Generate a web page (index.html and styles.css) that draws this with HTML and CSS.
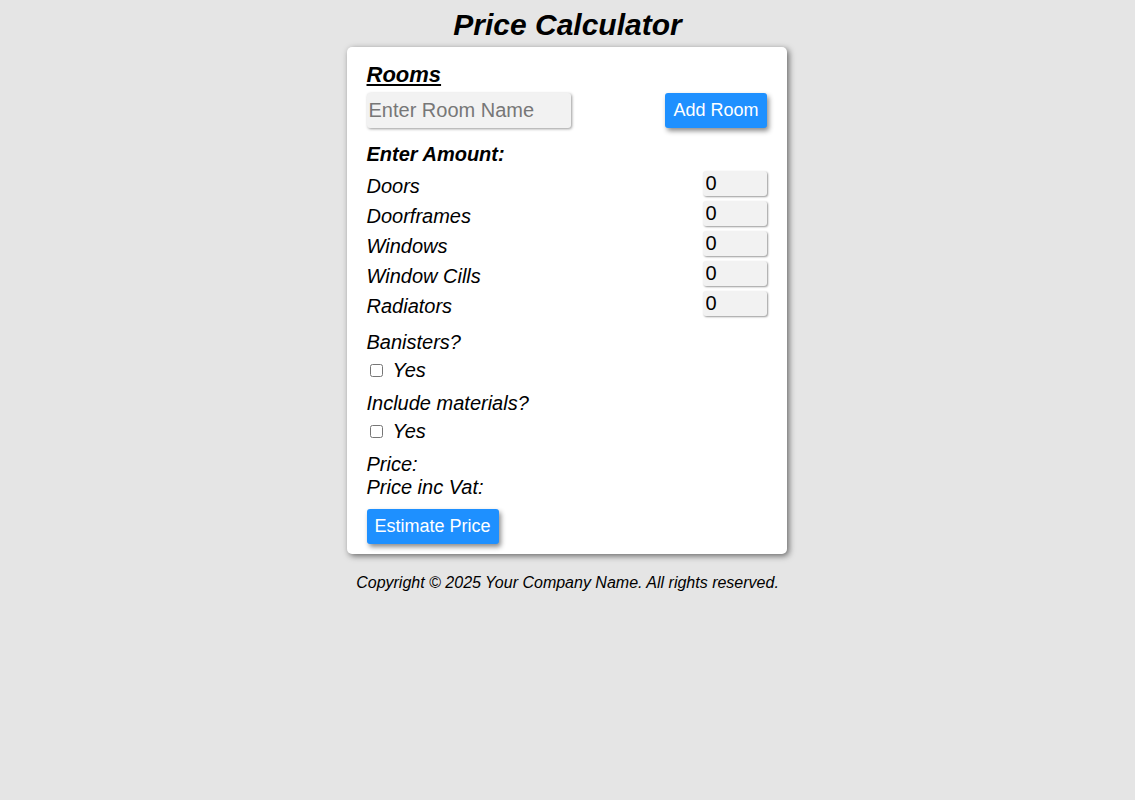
FILE: index.html
```html
<!DOCTYPE html>
<html>
<head>
<meta charset="utf-8">
<link rel="stylesheet" href="styles.css">
</head>
<body>
<h1 class="title">Price Calculator</h1>
<div class="card">
  <div class="rooms-label">Rooms</div>
  <div class="room-row">
    <input class="room-input" type="text" placeholder="Enter Room Name">
    <button class="btn">Add Room</button>
  </div>
  <div class="amount-label">Enter Amount:</div>
  <div class="items">
    <div class="item"><span>Doors</span><input class="num" type="text" value="0"></div>
    <div class="item"><span>Doorframes</span><input class="num" type="text" value="0"></div>
    <div class="item"><span>Windows</span><input class="num" type="text" value="0"></div>
    <div class="item"><span>Window Cills</span><input class="num" type="text" value="0"></div>
    <div class="item"><span>Radiators</span><input class="num" type="text" value="0"></div>
  </div>
  <div class="question first">Banisters?</div>
  <label class="check"><input type="checkbox"><span>Yes</span></label>
  <div class="question">Include materials?</div>
  <label class="check"><input type="checkbox"><span>Yes</span></label>
  <div class="prices">
    <div>Price:</div>
    <div>Price inc Vat:</div>
  </div>
  <button class="btn estimate">Estimate Price</button>
</div>
<p class="footer">Copyright © 2025 Your Company Name. All rights reserved.</p>
</body>
</html>
```
FILE: styles.css
```css
html, body {
  margin: 0;
  padding: 0;
  background: #e5e5e5;
  font-family: "Liberation Sans", Arial, sans-serif;
  color: #000;
}
body {
  padding-top: 6px;
}
.title {
  margin: 0 0 4px;
  text-align: center;
  font-size: 30px;
  font-style: italic;
  font-weight: bold;
  line-height: 37px;
}
.card {
  width: 400px;
  margin: 0 0 0 calc(50% - 221px);
  background: #fff;
  border-radius: 5px;
  padding: 15px 20px 10px;
  box-shadow: 2px 2px 6px rgba(0, 0, 0, 0.55);
}
.rooms-label {
  font-size: 22px;
  font-weight: bold;
  font-style: italic;
  text-decoration: underline;
  line-height: 25px;
}
.room-row {
  display: flex;
  justify-content: space-between;
  align-items: center;
  margin-top: 6px;
}
.room-input {
  width: 204px;
  height: 35px;
  box-sizing: border-box;
  border: none;
  border-radius: 3px;
  background: #f2f2f2;
  box-shadow: 1px 1px 3px rgba(0, 0, 0, 0.4);
  font-family: "Liberation Sans", Arial, sans-serif;
  font-size: 20px;
  padding: 0 2px;
  outline: none;
}
.room-input::placeholder {
  color: #777;
}
.btn {
  height: 35px;
  box-sizing: border-box;
  border: none;
  border-radius: 3px;
  background: #1e90ff;
  color: #fff;
  font-family: "Liberation Sans", Arial, sans-serif;
  font-size: 18px;
  padding: 0 8px;
  box-shadow: 2px 3px 5px rgba(0, 0, 0, 0.45);
  cursor: pointer;
}
.amount-label {
  margin-top: 15px;
  font-size: 20px;
  font-weight: bold;
  font-style: italic;
  line-height: 23px;
}
.items {
  margin-top: 5px;
}
.item {
  display: flex;
  justify-content: space-between;
  align-items: flex-start;
  height: 30px;
  font-size: 20px;
  font-style: italic;
  line-height: 30px;
}
.num {
  width: 64px;
  height: 25px;
  box-sizing: border-box;
  border: none;
  border-radius: 3px;
  background: #f2f2f2;
  box-shadow: 1px 1px 2px rgba(0, 0, 0, 0.4);
  font-family: "Liberation Sans", Arial, sans-serif;
  font-size: 20px;
  padding: 0 3px;
  outline: none;
}
.question {
  margin-top: 10px;
  font-size: 20px;
  font-style: italic;
  line-height: 23px;
}
.question.first {
  margin-top: 10px;
}
.check {
  display: flex;
  align-items: center;
  margin-top: 5px;
  font-size: 20px;
  font-style: italic;
  line-height: 23px;
}
.check input {
  width: 13px;
  height: 13px;
  margin: 0 10px 0 3px;
}
.prices {
  margin-top: 10px;
  font-size: 20px;
  font-style: italic;
  line-height: 23px;
}
.estimate {
  margin-top: 10px;
  display: block;
}
.footer {
  margin: 20px 0 0;
  text-align: center;
  font-size: 16px;
  font-style: italic;
  line-height: 18px;
}
```
